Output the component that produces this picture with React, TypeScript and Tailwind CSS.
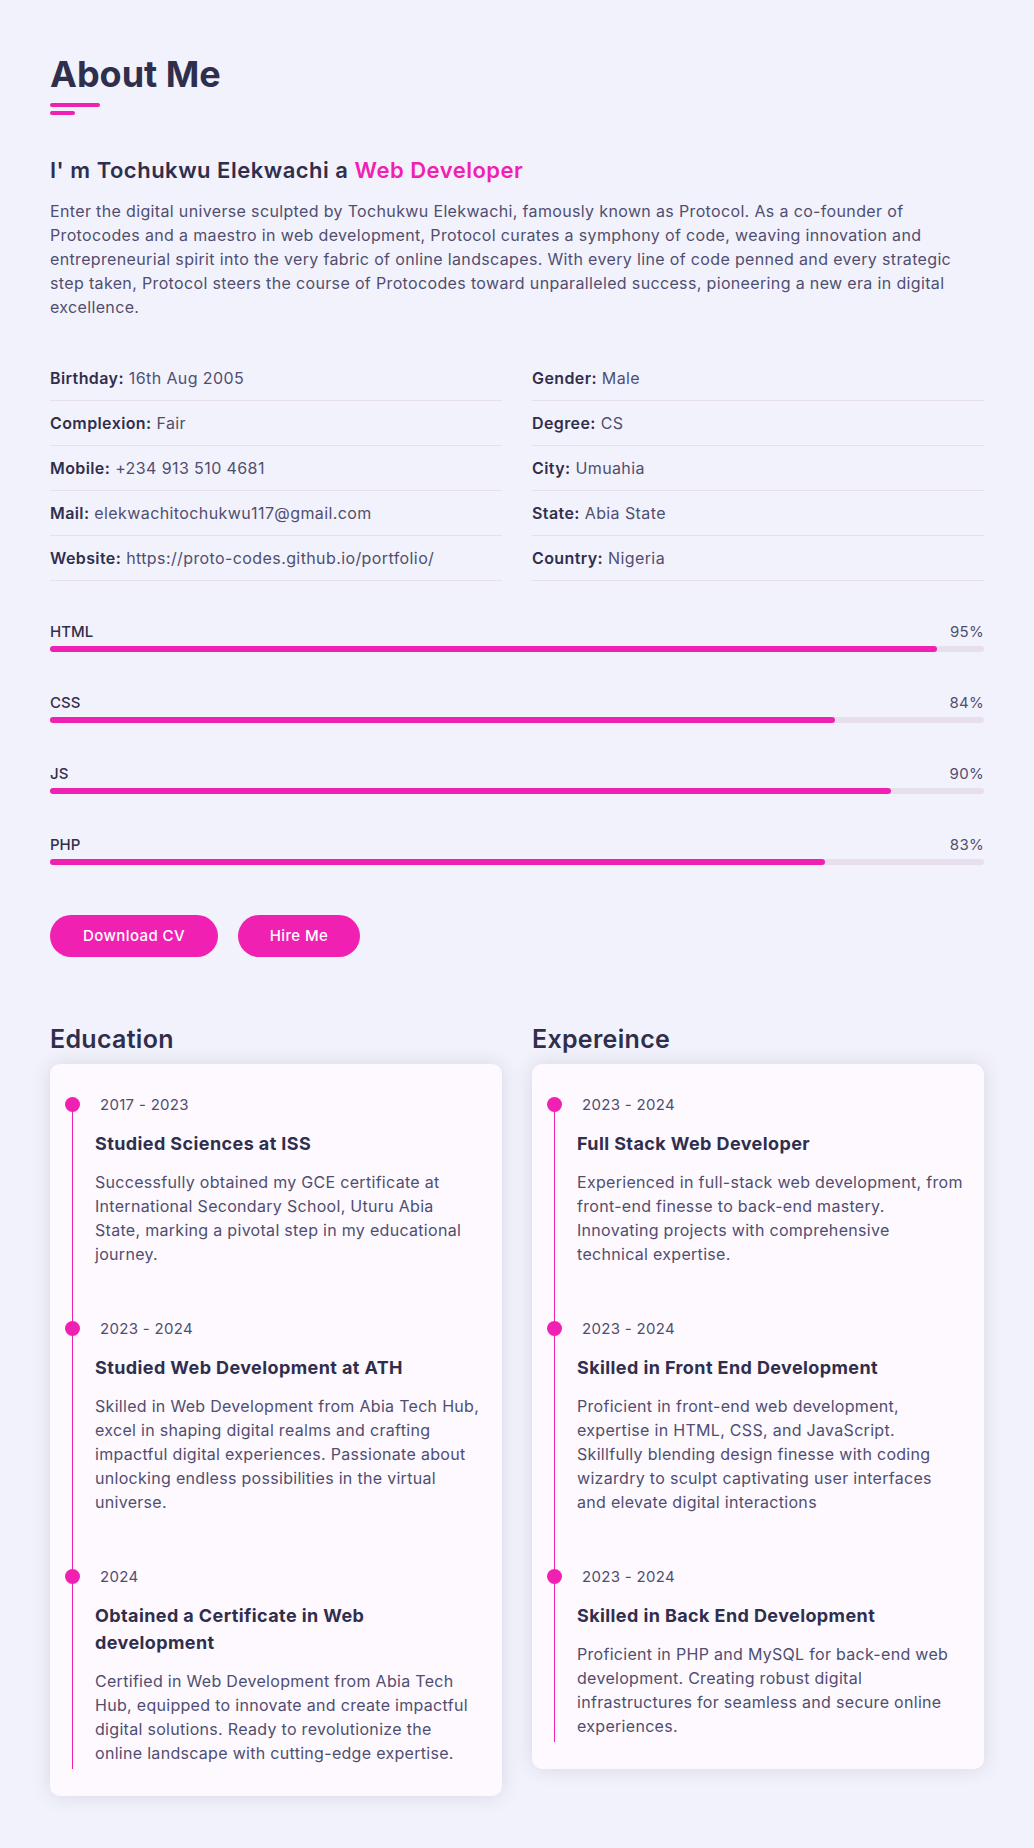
import React from "react";

const info = [
  ["Birthday", "16th Aug 2005", "Gender", "Male"],
  ["Complexion", "Fair", "Degree", "CS"],
  ["Mobile", "+234 913 510 4681", "City", "Umuahia"],
  ["Mail", "elekwachitochukwu117@gmail.com", "State", "Abia State"],
  ["Website", "https://proto-codes.github.io/portfolio/", "Country", "Nigeria"],
];

const skills = [
  { name: "HTML", value: 95 },
  { name: "CSS", value: 84 },
  { name: "JS", value: 90 },
  { name: "PHP", value: 83 },
];

const education = [
  {
    date: "2017 - 2023",
    title: "Studied Sciences at ISS",
    text: "Successfully obtained my GCE certificate at International Secondary School, Uturu Abia State, marking a pivotal step in my educational journey.",
  },
  {
    date: "2023 - 2024",
    title: "Studied Web Development at ATH",
    text: "Skilled in Web Development from Abia Tech Hub, excel in shaping digital realms and crafting impactful digital experiences. Passionate about unlocking endless possibilities in the virtual universe.",
  },
  {
    date: "2024",
    title: "Obtained a Certificate in Web development",
    text: "Certified in Web Development from Abia Tech Hub, equipped to innovate and create impactful digital solutions. Ready to revolutionize the online landscape with cutting-edge expertise.",
  },
];

const experience = [
  {
    date: "2023 - 2024",
    title: "Full Stack Web Developer",
    text: "Experienced in full-stack web development, from front-end finesse to back-end mastery. Innovating projects with comprehensive technical expertise.",
  },
  {
    date: "2023 - 2024",
    title: "Skilled in Front End Development",
    text: "Proficient in front-end web development, expertise in HTML, CSS, and JavaScript. Skillfully blending design finesse with coding wizardry to sculpt captivating user interfaces and elevate digital interactions",
  },
  {
    date: "2023 - 2024",
    title: "Skilled in Back End Development",
    text: "Proficient in PHP and MySQL for back-end web development. Creating robust digital infrastructures for seamless and secure online experiences.",
  },
];

type Item = { date: string; title: string; text: string };

function Timeline({ heading, items }: { heading: string; items: Item[] }) {
  return (
    <div>
      <h3 className="text-[25px] font-semibold leading-[30px] tracking-[0.3px] text-[#302e4d]">{heading}</h3>
      <div className="mt-[10px] rounded-[10px] bg-[#fdf9ff] pb-[27px] pl-[22px] pr-[19.5px] pt-[33px] shadow-[0_0_20px_rgba(48,46,77,0.13)]">
        {items.map((item, i) => (
          <div
            key={i}
            className={`relative border-l border-[#f021b2] pl-[22px] ${i === items.length - 1 ? "pb-[4px]" : "pb-[55px]"}`}
          >
            <span className="absolute -left-[8px] top-0 h-[15px] w-[15px] rounded-full bg-[#f021b2]" />
            <p className="pl-[5px] text-[15px] leading-[16px] tracking-[0.3px] text-[#504e70]">{item.date}</p>
            <h4 className="mt-[17px] text-[18px] font-bold leading-[27px] tracking-[0.4px] text-[#302e4d]">
              {item.title}
            </h4>
            <p className="mt-[13px] text-[16px] leading-[24px] tracking-[0.3px] text-[#504e70]">{item.text}</p>
          </div>
        ))}
      </div>
    </div>
  );
}

export default function App() {
  return (
    <div className="min-h-[1848px] bg-[#f2f2fc] px-[50px] pt-[53px] font-['Inter',sans-serif]">
      <h2 className="text-[36px] font-bold leading-[43px] text-[#302e4d]">About Me</h2>
      <div className="mt-[7px] h-[4px] w-[50px] rounded-full bg-[#f021b2]" />
      <div className="mt-[4px] h-[4px] w-[25px] rounded-full bg-[#f021b2]" />

      <h3 className="mt-[42px] text-[22px] font-semibold leading-[26px] tracking-[0.5px] text-[#302e4d]">
        I' m Tochukwu Elekwachi a <span className="text-[#f021b2]">Web Developer</span>
      </h3>
      <p className="mt-[16px] text-[16px] leading-[24px] tracking-[0.35px] text-[#504e70]">
        Enter the digital universe sculpted by Tochukwu Elekwachi, famously known as Protocol. As a co-founder of
        Protocodes and a maestro in web development, Protocol curates a symphony of code, weaving innovation and
        entrepreneurial spirit into the very fabric of online landscapes. With every line of code penned and every
        strategic step taken, Protocol steers the course of Protocodes toward unparalleled success, pioneering a new era
        in digital excellence.
      </p>

      <div className="mt-[37px] grid grid-cols-2 gap-x-[30px]">
        {info.map(([k1, v1, k2, v2]) => (
          <React.Fragment key={k1}>
            <div className="border-b border-[#e8dfec] py-[10px] text-[16px] leading-[24px] tracking-[0.4px] text-[#504e70]">
              <span className="font-semibold text-[#302e4d]">{k1}:</span> {v1}
            </div>
            <div className="border-b border-[#e8dfec] py-[10px] text-[16px] leading-[24px] tracking-[0.4px] text-[#504e70]">
              <span className="font-semibold text-[#302e4d]">{k2}:</span> {v2}
            </div>
          </React.Fragment>
        ))}
      </div>

      <div className="mt-[41px] space-y-[41px]">
        {skills.map((s) => (
          <div key={s.name}>
            <div className="flex justify-between text-[15px] leading-[20px]">
              <span className="font-medium text-[#302e4d]">{s.name}</span>
              <span className="tracking-[0.3px] text-[#504e70]">{s.value}%</span>
            </div>
            <div className="mt-[4px] h-[6px] rounded-full bg-[#e8dfec]">
              <div className="h-full rounded-full bg-[#f021b2]" style={{ width: `${s.value}%` }} />
            </div>
          </div>
        ))}
      </div>

      <div className="mt-[50px] flex gap-[20px]">
        <button className="h-[42px] w-[168px] rounded-full bg-[#f021b2] text-[15px] font-medium tracking-[0.4px] text-white">
          Download CV
        </button>
        <button className="h-[42px] w-[122px] rounded-full bg-[#f021b2] text-[15px] font-medium tracking-[0.4px] text-white">
          Hire Me
        </button>
      </div>

      <div className="mt-[67px] grid grid-cols-2 gap-x-[30px]">
        <Timeline heading="Education" items={education} />
        <Timeline heading="Expereince" items={experience} />
      </div>
    </div>
  );
}
